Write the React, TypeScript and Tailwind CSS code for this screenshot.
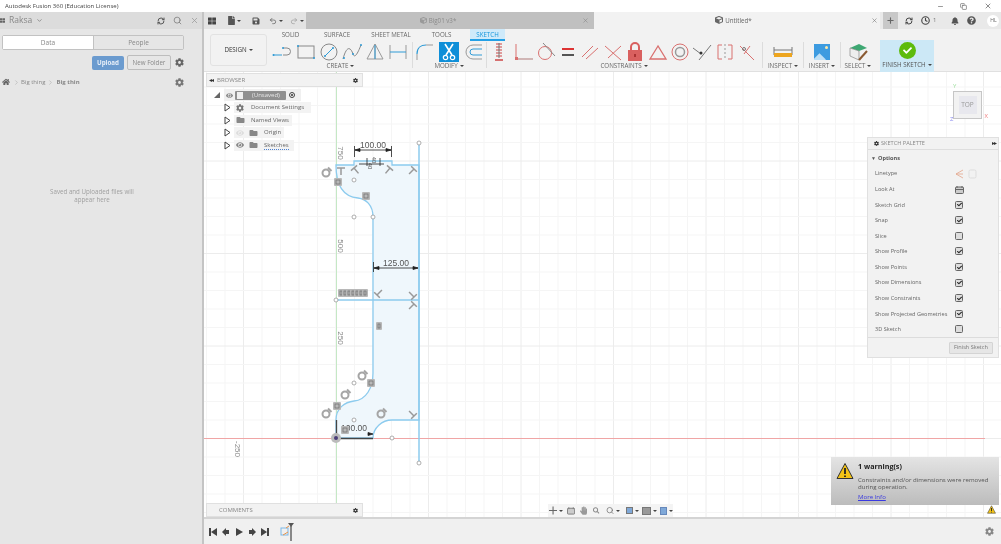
import React from "react";
import { FaBell, FaCog, FaFile, FaHandPaper, FaHome, FaQuestionCircle, FaSave, FaSearch, FaEye, FaFolder, FaCheck, FaThLarge, FaCube } from "react-icons/fa";
import { ChevronDown, ChevronRight, Minus, Plus, RefreshCw, Undo2, Redo2, X, Copy, Search, Clock } from "lucide-react";

const Caret = () => <span className="inline-block ml-[2px] align-middle w-0 h-0 border-x-[2px] border-x-transparent border-t-[2px] border-t-[#444]" />;

const RED = "#d9706f";
const BLUE = "#2f9bd6";

function Ic({ children, w = 22, h = 20 }: { children: React.ReactNode; w?: number; h?: number }) {
  return (
    <svg width={w} height={h} viewBox={`0 0 ${w} ${h}`} fill="none">
      {children}
    </svg>
  );
}

const createIcons = [
  <Ic key="line"><path d="M11 6h4a3.500 3.500 0 0 1 0 7h-4" stroke="#888" strokeWidth="1" /><path d="M1 13h9" stroke={BLUE} /><circle cx="1.500" cy="13" r="1" fill={BLUE} /><circle cx="11" cy="6" r="1" fill={BLUE} /></Ic>,
  <Ic key="rect"><rect x="3" y="4" width="16" height="12" stroke="#888" /><circle cx="3" cy="4" r="1" fill={BLUE} /><circle cx="19" cy="16" r="1" fill={BLUE} /></Ic>,
  <Ic key="circle"><circle cx="11" cy="10" r="8" stroke="#888" /><path d="M7 14l8-8" stroke={BLUE} /><circle cx="7" cy="14" r="1" fill={BLUE} /><circle cx="15" cy="6" r="1" fill={BLUE} /></Ic>,
  <Ic key="spline"><path d="M2 17C6 2 10 6 12 12S18 8 20 3" stroke="#888" /><circle cx="3" cy="16" r="1" fill={BLUE} /><circle cx="12" cy="12" r="1" fill={BLUE} /><circle cx="20" cy="3" r="1" fill={BLUE} /></Ic>,
  <Ic key="tri"><path d="M11 2L3 17h16L11 2v15" stroke="#999" /><path d="M11 3v14" stroke={BLUE} /></Ic>,
  <Ic key="slot"><path d="M3 3v14M19 3v14" stroke="#999" /><path d="M3 10h16" stroke={BLUE} /></Ic>,
];

const modifyIcons = [
  <Ic key="fillet"><path d="M3 18V12M12 3h7" stroke="#999" /><path d="M3 12C3 6 7 3 12 3" stroke={BLUE} strokeWidth="1.200" /></Ic>,
  <div key="trim" className="w-[20px] h-[20px] bg-[#0f8fd8] flex items-center justify-center">
    <Ic w={14} h={18}><path d="M3 1l7 11M11 1L4 12" stroke="#fff" strokeWidth="1.600" /><circle cx="3.500" cy="14.500" r="2.200" stroke="#fff" strokeWidth="1.200" /><circle cx="10.500" cy="14.500" r="2.200" stroke="#fff" strokeWidth="1.200" /></Ic>
  </div>,
  <Ic key="offset"><path d="M20 3h-9a7 7 0 0 0 0 14h9" stroke="#999" /><path d="M20 7h-9a3 3 0 0 0 0 6h9" stroke={BLUE} /></Ic>,
];

const constraintIcons = [
  <Ic key="dim"><path d="M6 2h6M6 5h6M6 8h6M6 11h6M6 14h6" stroke="#c44" /><path d="M9 1v15" stroke="#777" /><path d="M5 18h8" stroke="#c44" strokeWidth="1.500" /></Ic>,
  <Ic key="l"><path d="M4 2v15h17" stroke={RED} /><rect x="3" y="15" width="3" height="3" fill={RED} /><path d="M6 17h15" stroke="#bbb" /></Ic>,
  <Ic key="tan"><circle cx="10" cy="11" r="6.500" stroke={RED} /><path d="M8 1l12 13" stroke="#888" /></Ic>,
  <Ic key="eq"><path d="M5 7h12" stroke="#d33" strokeWidth="2" /><path d="M5 13h12" stroke="#555" strokeWidth="2" /></Ic>,
  <Ic key="par"><path d="M3 15L14 4M7 17L19 6" stroke={RED} /></Ic>,
  <Ic key="perp"><path d="M3 4l16 14M19 4L6 16" stroke={RED} /></Ic>,
  <Ic key="lock"><rect x="4" y="8" width="14" height="11" fill="#d9605f" /><path d="M7 8V5a4 4 0 0 1 8 0v3" stroke="#d9605f" strokeWidth="2" /><rect x="10" y="12" width="2" height="3" fill="#a33" /></Ic>,
  <Ic key="hori"><path d="M11 4L3 17h16z" stroke={RED} strokeWidth="1.300" /></Ic>,
  <Ic key="conc"><circle cx="11" cy="10" r="8" stroke={RED} /><circle cx="11" cy="10" r="4.500" stroke="#999" strokeWidth="1.500" /></Ic>,
  <Ic key="mid"><path d="M2 6l8 6M20 3L8 18" stroke="#777" /><circle cx="10" cy="11" r="1.500" fill="#333" /></Ic>,
  <Ic key="sym"><path d="M8 3H4v14h4M14 3h4v14h-4" stroke={RED} /><path d="M11 2v16" stroke="#999" strokeDasharray="2 2" /></Ic>,
  <Ic key="fix"><path d="M4 4l14 14M14 4L8 12" stroke={RED} /><circle cx="8" cy="7" r="1.500" stroke="#777" /></Ic>,
];

function Section({ label, width, children, gap = "justify-between" }: { label: string; width: string; children: React.ReactNode; gap?: string }) {
  return (
    <div className={`flex flex-col items-center ${width}`}>
      <div className={`flex items-center w-full h-[21px] ${gap}`}>{children}</div>
      <div className="text-[6.200px] leading-[8px] text-[#666] whitespace-nowrap">
        {label}
        <Caret />
      </div>
    </div>
  );
}

const Sep = ({ className }: { className: string }) => <div className={`w-px h-[26px] bg-[#dcdcdc] self-start mt-[1px] ${className}`} />;

function Toolbar() {
  return (
    <div className="h-[43px] bg-[#f2f2f2] border-b border-[#e0e0e0] flex shrink-0">
      <div className="ml-[6px] mt-[5px] w-[57px] h-[32px] rounded-[3px] border border-[#e2e2e2] flex items-center justify-center text-[6.200px] text-[#333]">
        DESIGN
        <Caret />
      </div>
      <div className="flex flex-col ml-[3px] flex-1">
        <div className="flex h-[12px] text-[6.200px] leading-[11px] text-[#666] text-center">
          <div className="w-[39px] ml-[1px]">SOLID</div>
          <div className="w-[54px]">SURFACE</div>
          <div className="w-[54px]">SHEET METAL</div>
          <div className="w-[52px] pr-[5px]">TOOLS</div>
          <div className="w-[35px] bg-[#cfeafa] text-[#1596dc] border-b-2 border-[#23a0e6]">SKETCH</div>
        </div>
        <div className="flex items-start">
          <Section label="CREATE" width="w-[137px] ml-[2px]">{createIcons}</Section>
          <Sep className="ml-[3px]" />
          <Section label="MODIFY" width="w-[70px] ml-[1px]">{modifyIcons}</Section>
          <Sep className="ml-[2px]" />
          <Section label="CONSTRAINTS" width="w-[268px] ml-[3px]">{constraintIcons}</Section>
          <Sep className="ml-[4px]" />
          <Section label="INSPECT" width="w-[36px] ml-[2px]" gap="justify-center">
            <Ic><path d="M2 5v8M20 5v8M2 8h18" stroke="#777" /><rect x="2" y="11" width="18" height="4" fill="#eda51f" /></Ic>
          </Section>
          <Sep className="ml-[2px]" />
          <Section label="INSERT" width="w-[34px] ml-[1px]" gap="justify-center">
            <div className="w-[16px] h-[16px] bg-[#3d9be0] relative overflow-hidden">
              <div className="absolute left-[1px] bottom-[-4px] w-[9px] h-[9px] bg-[#bfe0f6] rotate-45" />
              <div className="absolute right-[2px] top-[2px] w-[3px] h-[3px] rounded-full bg-[#fde9a8]" />
            </div>
          </Section>
          <Sep className="ml-[1px]" />
          <Section label="SELECT" width="w-[34px]" gap="justify-center">
            <Ic>
              <path d="M3 6l9-4 8 4-8 3z" fill="#3fa873" />
              <path d="M3 6l9 3v9l-9-4z" fill="#eee" stroke="#777" strokeWidth=".6" />
              <path d="M12 18l8-9" stroke="#8a5a32" strokeWidth="2" />
            </Ic>
          </Section>
          <div className="w-[54px] h-[32px] mt-[-1px] ml-[5px] bg-[#cce8f6] flex flex-col items-center shrink-0">
            <div className="w-[17px] h-[17px] rounded-full bg-[#5dbb0c] flex items-center justify-center mt-[2px]">
              <FaCheck className="text-white w-[9px] h-[9px]" />
            </div>
            <div className="text-[6.200px] leading-[8px] text-[#555] mt-[2px] whitespace-nowrap">
              FINISH SKETCH
              <Caret />
            </div>
          </div>
        </div>
      </div>
    </div>
  );
}

function TabBar() {
  return (
    <div className="h-[17px] bg-[#c9c9c9] flex items-center shrink-0 text-[#555]">
      <div className="w-[102px] h-full bg-[#e3e3e3] flex items-center shrink-0">
        <FaThLarge className="w-[8px] h-[8px] ml-[4px] text-[#444]" />
        <FaFile className="w-[7px] h-[9px] ml-[12px] text-[#555]" />
        <Caret />
        <FaSave className="w-[8px] h-[8px] ml-[11px] text-[#555]" />
        <Undo2 className="w-[8px] h-[8px] ml-[9px] text-[#555]" />
        <Caret />
        <Redo2 className="w-[8px] h-[8px] ml-[7px] text-[#999]" />
        <Caret />
      </div>
      <div className="w-[288px] h-full bg-[#c0c0c0] flex items-center shrink-0 relative rounded-tl-[2px]">
        <div className="flex-1 flex items-center justify-center text-[6.200px] text-[#8a8a8a] gap-[2px] pr-[12px]">
          <FaCube className="w-[7px] h-[7px] text-[#999]" />
          Big01 v3*
        </div>
        <X className="w-[7px] h-[7px] mr-[5px] text-[#888]" />
      </div>
      <div className="w-[286px] h-full bg-[#f2f2f2] flex items-center shrink-0">
        <div className="flex-1 flex items-center justify-center text-[6.200px] text-[#666] gap-[2px] pl-[2px]">
          <FaCube className="w-[8px] h-[8px] text-[#666]" />
          Untitled*
        </div>
        <X className="w-[7px] h-[7px] mr-[2px] text-[#777]" />
      </div>
      <div className="flex-1 h-full bg-[#e9e9e9] flex items-center">
        <div className="w-[15px] ml-[3px] h-full bg-[#c8c8c8] flex items-center justify-center">
          <Plus className="w-[9px] h-[9px] text-[#666]" strokeWidth={3} />
        </div>
        <RefreshCw className="w-[8px] h-[8px] ml-[7px] text-[#444]" strokeWidth={3} />
        <Clock className="w-[9px] h-[9px] ml-[8px] text-[#444]" strokeWidth={3} />
        <span className="text-[6px] ml-[3px] text-[#777]">1</span>
        <FaBell className="w-[8px] h-[8px] ml-[15px] text-[#555]" />
        <FaQuestionCircle className="w-[9px] h-[9px] ml-[8px] text-[#555]" />
        <div className="w-[12px] h-[12px] ml-[11px] rounded-full bg-white text-[5px] text-[#666] flex items-center justify-center">HL</div>
      </div>
    </div>
  );
}

function LeftPanel() {
  return (
    <div className="w-[204px] shrink-0 bg-[#e6e6e6] border-r-2 border-[#c4c4c4] flex flex-col text-[#888]">
      <div className="h-[17px] bg-[#dcdcdc] flex items-center">
        <FaThLarge className="w-[5px] h-[5px] text-[#666]" />
        <span className="ml-[4px] text-[8.500px] text-[#888]">Raksa</span>
        <ChevronDown className="w-[7px] h-[7px] ml-[4px] text-[#666]" />
        <RefreshCw className="w-[8px] h-[8px] ml-auto text-[#555]" strokeWidth={3} />
        <Search className="w-[9px] h-[9px] ml-[8px] text-[#777]" />
        <X className="w-[9px] h-[9px] ml-[8px] mr-[3px] text-[#999]" />
      </div>
      <div className="mt-[6px] mx-[2px] w-[182px] h-[15px] flex border border-[#c2c2c2] rounded-[2px] text-[6.500px] text-[#888]">
        <div className="w-[90px] bg-white flex items-center justify-center">Data</div>
        <div className="flex-1 bg-[#e6e6e6] border-l border-[#c2c2c2] flex items-center justify-center">People</div>
      </div>
      <div className="flex items-center mt-[5px] ml-[92px]">
        <div className="w-[32px] h-[14px] rounded-[2px] bg-[#6b9bcf] text-[#e6eef8] text-[6.200px] font-bold flex items-center justify-center">Upload</div>
        <div className="w-[44px] h-[15px] ml-[3px] rounded-[2px] border border-[#bdbdbd] text-[6.200px] flex items-center justify-center">New Folder</div>
        <FaCog className="w-[9px] h-[9px] ml-[4px] text-[#666]" />
      </div>
      <div className="flex items-center mt-[6px] ml-[2px] h-[12px] text-[6px] text-[#888]">
        <FaHome className="w-[8px] h-[8px] text-[#666]" />
        <ChevronRight className="w-[7px] h-[7px] ml-[3px] text-[#aaa]" />
        <span className="ml-[1px]">Big thing</span>
        <ChevronRight className="w-[7px] h-[7px] ml-[2px] text-[#aaa]" />
        <span className="ml-[2px] font-bold">Big thin</span>
        <FaCog className="w-[9px] h-[9px] ml-[95px] text-[#777]" />
      </div>
      <div className="mt-[100px] w-[184px] text-center text-[6.200px] leading-[8px] text-[#a0a0a0]">
        Saved and Uploaded files will
        <br />
        appear here
      </div>
    </div>
  );
}

const Perp = ({ x, y, r }: { x: number; y: number; r: number }) => (
  <g transform={`translate(${x} ${y}) rotate(${r})`} stroke="#999" strokeWidth="1.500" fill="none">
    <path d="M-4 0h8M0 0v7" />
  </g>
);

const Ring = ({ x, y }: { x: number; y: number }) => (
  <g fill="none" stroke="#a5a5a5" strokeWidth="2">
    <circle cx={x} cy={y} r="3.500" />
    <path d={`M${x + 2} ${y - 5.500}l3.500 3.500`} />
  </g>
);

const Dot = ({ x, y }: { x: number; y: number }) => <circle cx={x} cy={y} r="2" fill="#fff" stroke="#999" strokeWidth=".8" />;

const Chip = ({ x, y, w = 8 }: { x: number; y: number; w?: number }) => (
  <g>
    <rect x={x} y={y} width={w} height="8" rx="1" fill="#b8b8b8" />
    <rect x={x + 2} y={y + 2} width={w - 4} height="4" fill="none" stroke="#747474" strokeWidth=".8" />
  </g>
);

function Sketch() {
  const xs = Array.from({ length: 44 }, (_, i) => 336 - 18.5 * 7 + 18.5 * i);
  const ys = Array.from({ length: 25 }, (_, i) => 438.5 - 18.5 * 20 + 18.5 * i);
  const major = (v: number, o: number) => Math.abs((v - o) / 92.5 - Math.round((v - o) / 92.5)) < 0.01;
  const outline = "M336 165 H354 V161 H392 V165 H419 V420 H392 C382 420 373 428 373 438 H336 V420 C336 408 345 402 354 401 C366 400 373 388 373 373 V217 C373 205 366 199 358 198 C346 197 336 190 336 165 Z";
  return (
    <svg className="absolute inset-0" width="797" height="445" viewBox="204 72 797 445">
      {xs.map((x) => <line key={x} x1={x} x2={x} y1={72} y2={517} stroke={major(x, 336) ? "#ececec" : "#f5f5f5"} />)}
      {ys.map((y) => <line key={y} y1={y} y2={y} x1={204} x2={1001} stroke={major(y, 438.5) ? "#ececec" : "#f5f5f5"} />)}
      <line x1={336.500} x2={336.500} y1={72} y2={517} stroke="#c5e8c5" />
      <line x1={204} x2={985} y1={438.500} y2={438.500} stroke="#f0a5a5" />
      <path d={outline} fill="#eff7fc" />
      <path d={outline} fill="none" stroke="#8ccbee" strokeWidth="1.300" />
      <path d="M419 143V463" stroke="#8ccbee" strokeWidth="1.500" />
      <path d="M336 300H419" stroke="#8ccbee" strokeWidth="1.300" />
      <path d="M336 438.500H373M336.500 420V438" stroke="#444" strokeWidth="1.300" />
      {[[419, 143], [419, 463], [373, 217], [354, 180], [354, 217], [336, 300], [354, 383], [354, 420], [392, 438]].map(([x, y], i) => <Dot key={i} x={x} y={y} />)}
      <circle cx="336" cy="438" r="5" fill="#bbb" /><circle cx="336" cy="438" r="2" fill="#4a3d78" />
      <g fontFamily="Liberation Sans, sans-serif" fill="#555" fontSize="8.500">
        <text x="373" y="148" textAnchor="middle">100.00</text>
        <text x="396" y="266" textAnchor="middle">125.00</text>
        <text x="354" y="431" textAnchor="middle">100.00</text>
        <text transform="translate(338 153) rotate(90)" fontSize="8" fill="#888" textAnchor="middle">750</text>
        <text transform="translate(338 246) rotate(90)" fontSize="8" fill="#888" textAnchor="middle">500</text>
        <text transform="translate(338 338) rotate(90)" fontSize="8" fill="#888" textAnchor="middle">250</text>
        <text transform="translate(235 449) rotate(90)" fontSize="8" fill="#888" textAnchor="middle">-250</text>
        <text transform="translate(372 160) rotate(90)" fontSize="6" textAnchor="middle">40</text>
        <text transform="translate(368 166) rotate(90)" fontSize="6" textAnchor="middle">40</text>
      </g>
      <g stroke="#222" strokeWidth=".8" fill="#222">
        <path d="M355 150H391M354.500 146V157M391.500 146V157" fill="none" />
        <path d="M355 150l5-1.500v3zM391 150l-5-1.500v3z" />
        <path d="M374 268H418M373.500 262V272" fill="none" />
        <path d="M374 268l5-1.500v3zM418 268l-5-1.500v3z" />
        <path d="M373 434l-5-1.500v3z" />
        <path d="M359 164H384M367 158v8M380 158v8" fill="none" />
      </g>
      <Perp x={341} y={168} r={0} /><Perp x={354} y={168} r={-40} /><Perp x={390} y={168} r={40} /><Perp x={414} y={169} r={45} />
      <Perp x={377} y={295} r={-135} /><Perp x={414} y={297} r={135} /><Perp x={414} y={304} r={45} /><Perp x={414} y={416} r={135} />
      <Ring x={326} y={173} /><Ring x={345} y={395} /><Ring x={326} y={414} /><Ring x={362} y={376} /><Ring x={381} y={414} />
      <Chip x={334} y={178} /><Chip x={362} y={192} /><Chip x={367} y={379} /><Chip x={333} y={402} /><Chip x={376} y={322} w={6} />
      {[338, 342, 346, 350, 354, 358, 362].map((x) => <Chip key={x} x={x} y={289} w={6} />)}
      <Chip x={341} y={426} />
    </svg>
  );
}

function Browser() {
  const Tri = () => <svg width="7" height="9" viewBox="0 0 7 9"><path d="M1 1l5 3.500-5 3.500z" fill="#fff" stroke="#444" /></svg>;
  return (
    <div className="absolute left-[2px] top-[1px] w-[157px] text-[6px] text-[#666]">
      <div className="h-[14px] bg-[#f2f2f2] border border-[#e0e0e0] flex items-center pl-[2px]">
        <span className="text-[#333] text-[6px] tracking-[-1px]">◂◂</span>
        <span className="ml-[4px] text-[#888]">BROWSER</span>
        <FaCog className="w-[5px] h-[5px] ml-auto mr-[4px] text-[#333]" />
      </div>
      <div className="flex items-center h-[12px] mt-[2px] ml-[8px]">
        <svg width="7" height="7" viewBox="0 0 7 7"><path d="M6 0v6H0z" fill="#666" /></svg>
        <div className="flex items-center h-[12px] w-[77px] bg-[#f0f0f0] ml-[3px]">
          <FaEye className="w-[7px] h-[7px] ml-[2px] text-[#888]" />
          <div className="ml-[2px] w-[51px] h-[9px] bg-[#8f8f8f] rounded-[1px] flex items-center text-[#e6e6e6]">
            <span className="w-[6px] h-[7px] bg-[#eee] ml-[2px]" />
            <span className="ml-[9px] text-[6px]">(Unsaved)</span>
          </div>
          <div className="w-[6px] h-[6px] ml-[3px] rounded-full border border-[#444] flex items-center justify-center"><span className="w-[2px] h-[2px] rounded-full bg-[#333]" /></div>
        </div>
      </div>
      <div className="flex items-center h-[12.500px] ml-[18px] mt-[0.5px]">
        <Tri />
        <div className="flex items-center h-[11px] bg-[#f3f3f3] w-[77px] ml-[3px] pl-[2px]">
          <FaCog className="w-[8px] h-[8px] text-[#777]" />
          <span className="ml-[7px] whitespace-nowrap">Document Settings</span>
        </div>
      </div>
      <div className="flex items-center h-[12.500px] ml-[18px]">
        <Tri />
        <div className="flex items-center h-[11px] bg-[#f3f3f3] w-[58px] ml-[3px] pl-[2px]">
          <FaFolder className="w-[9px] h-[8px] text-[#888]" />
          <span className="ml-[6px] whitespace-nowrap">Named Views</span>
        </div>
      </div>
      <div className="flex items-center h-[12.500px] ml-[18px]">
        <Tri />
        <div className="flex items-center h-[11px] bg-[#f3f3f3] w-[50px] ml-[3px] pl-[2px]">
          <FaEye className="w-[8px] h-[8px] text-[#ddd]" />
          <FaFolder className="w-[9px] h-[8px] ml-[5px] text-[#888]" />
          <span className="ml-[6px]">Origin</span>
        </div>
      </div>
      <div className="flex items-center h-[12.500px] ml-[18px]">
        <Tri />
        <div className="flex items-center h-[11px] bg-[#f3f3f3] w-[60px] ml-[3px] pl-[2px]">
          <FaEye className="w-[8px] h-[8px] text-[#888]" />
          <FaFolder className="w-[9px] h-[8px] ml-[5px] text-[#888]" />
          <span className="ml-[6px] border-b border-dotted border-[#4a7fd0] leading-[8px]">Sketches</span>
        </div>
      </div>
    </div>
  );
}

const paletteRows = [
  ["Sketch Grid", true], ["Snap", true], ["Slice", false], ["Show Profile", true], ["Show Points", true],
  ["Show Dimensions", true], ["Show Constraints", true], ["Show Projected Geometries", true], ["3D Sketch", false],
] as const;

function PaletteRow({ label, children }: { label: string; children: React.ReactNode }) {
  return (
    <div className="flex items-center h-[15.700px] pl-[7px]">
      <span className="w-[81px] whitespace-nowrap">{label}</span>
      {children}
    </div>
  );
}

function Palette() {
  return (
    <div className="absolute right-[2px] top-[65px] w-[132px] h-[221px] bg-[#f2f2f2] border border-[#e0e0e0] text-[5.600px] text-[#666] flex flex-col">
      <div className="h-[12px] flex items-center border-b border-[#dedede] pl-[6px]">
        <FaCog className="w-[5px] h-[5px] text-[#333]" />
        <span className="ml-[2px] text-[#888]">SKETCH PALETTE</span>
        <span className="ml-auto mr-[2px] text-[#333] text-[6px] tracking-[-1px]">▸▸</span>
      </div>
      <div className="h-[15px] mt-[1px] flex items-center pl-[3px] font-bold text-[#555]">
        <span className="text-[5px] mr-[2px]">▼</span>Options
      </div>
      <PaletteRow label="Linetype">
        <svg width="22" height="10" viewBox="0 0 22 10" className="ml-[-1px]" fill="none">
          <path d="M1 5l7-4M1 5l7 4M1 5h7" stroke="#e3a48a" strokeWidth=".8" />
          <rect x="14" y="1" width="7" height="8" rx="1.500" stroke="#ddd" />
        </svg>
      </PaletteRow>
      <PaletteRow label="Look At">
        <svg width="9" height="9" viewBox="0 0 9 9" className="ml-[-1px]"><rect x=".5" y="2" width="8" height="6.500" rx="1" fill="#ccc" stroke="#666" /><path d="M2 1v2M7 1v2M1 4.500h7" stroke="#666" /></svg>
      </PaletteRow>
      {paletteRows.map(([label, on]) => (
        <PaletteRow key={label} label={label}>
          <div className="w-[8px] h-[8px] rounded-[1.500px] border border-[#666] bg-[#ddd] flex items-center justify-center ml-[-1px]">
            {on && <FaCheck className="w-[5px] h-[5px] text-[#222]" />}
          </div>
        </PaletteRow>
      ))}
      <div className="mt-auto h-[20px] border-t border-[#dcdcdc] flex items-center justify-end pr-[5px]">
        <div className="w-[44px] h-[12px] bg-[#e6e6e6] border border-[#d4d4d4] rounded-[1px] flex items-center justify-center text-[#777]">Finish Sketch</div>
      </div>
    </div>
  );
}

function ViewCube() {
  return (
    <div className="absolute left-[749px] top-[19px] w-[29px] h-[28px] bg-[#f2f2f2] border border-[#c6c6c6] flex items-center justify-center">
      <div className="w-[18px] h-[18px] bg-[#e8e8ee] flex items-center justify-center text-[6.500px] text-[#999]">TOP</div>
      <span className="absolute left-[-1px] top-[-9px] text-[6px] leading-[7px] text-[#9fdf9f]">Y</span>
      <span className="absolute right-[-7px] bottom-[-2px] text-[6px] leading-[7px] text-[#f08080]">X</span>
      <span className="absolute left-[-4px] bottom-[-5px] text-[6px] leading-[7px] text-[#8888ee]">Z</span>
    </div>
  );
}

const WarnIcon = ({ s }: { s: number }) => (
  <svg width={s} height={s} viewBox="0 0 18 18"><path d="M9 1.500L17 16.500H1z" fill="#f3c316" stroke="#333" strokeWidth="1" /><path d="M9 6v6M9 13.500v1.500" stroke="#222" strokeWidth="1.800" /></svg>
);

function Warning() {
  return (
    <div className="absolute left-[627px] top-[385px] w-[168px] h-[48px] bg-gradient-to-b from-[#e4e4e4] to-[#bcbcbc] flex">
      <div className="ml-[5px] mt-[5px] shrink-0"><WarnIcon s={18} /></div>
      <div className="ml-[4px] mt-[5px] text-[6.100px] leading-[7px] text-[#555]">
        <div className="text-[7.200px] leading-[9px] font-bold text-[#222]">1 warning(s)</div>
        <div className="mt-[5px] w-[138px]">Constraints and/or dimensions were removed during operation.</div>
        <div className="mt-[3px] text-[#3a3ae0] underline">More Info</div>
      </div>
    </div>
  );
}

function NavBar() {
  return (
    <div className="absolute left-[344px] top-[432px] w-[125px] h-[13px] bg-[#f4f4f4] flex items-center pl-[1px] text-[#666]">
      <svg width="9" height="9" viewBox="0 0 9 9" fill="none"><path d="M4.500 0v9M0 4.500h9" stroke="#666" strokeWidth="1.200" /></svg>
      <Caret />
      <svg width="9" height="9" viewBox="0 0 9 9" className="ml-[4px]"><rect x=".5" y="2" width="8" height="6.500" rx="1" fill="#ccc" stroke="#777" /><path d="M2 1v2M7 1v2" stroke="#777" /></svg>
      <FaHandPaper className="w-[8px] h-[9px] ml-[5px] text-[#999]" />
      <FaSearch className="w-[7px] h-[7px] ml-[6px] text-[#888]" />
      <Search className="w-[9px] h-[9px] ml-[6px] text-[#666]" />
      <Caret />
      <div className="w-[8px] h-[7px] ml-[6px] bg-[#7fa8d8] border border-[#777]" />
      <Caret />
      <div className="w-[9px] h-[8px] ml-[3px] bg-[#999] border border-[#777]" />
      <Caret />
      <div className="w-[8px] h-[8px] ml-[3px] bg-[#7fa8d8] border border-[#6688bb]" />
      <Caret />
    </div>
  );
}

function Timeline() {
  const Ctl = ({ d, ml }: { d: string; ml: string }) => (
    <svg width="8" height="8" viewBox="0 0 8 8" className={ml}><path d={d} fill="#444" /></svg>
  );
  return (
    <div className="h-[27px] bg-[#f0f0f0] border-t-2 border-[#d4d4d4] flex items-center shrink-0">
      <Ctl ml="ml-[5px]" d="M0 0h2v8H0zM8 0v8L2 4z" />
      <Ctl ml="ml-[5px]" d="M0 4l4-4v8zM4 2h3v4H4z" />
      <Ctl ml="ml-[5px]" d="M1 0l7 4-7 4z" />
      <Ctl ml="ml-[5px]" d="M8 4L4 0v8zM4 2H1v4h3z" />
      <Ctl ml="ml-[5px]" d="M8 0H6v8h2zM0 0v8l6-4z" />
      <svg width="15" height="18" viewBox="0 0 15 18" className="ml-[11px]" fill="none">
        <rect x="1" y="5" width="7" height="7" stroke="#7ab7e8" />
        <path d="M6 5l3-2M3 12l5-3" stroke="#e8944a" />
        <path d="M11 3v15" stroke="#666" strokeWidth="1.500" />
        <path d="M8 0h6l-3 4z" fill="#555" />
      </svg>
      <FaCog className="w-[9px] h-[9px] ml-auto mr-[7px] text-[#888]" />
    </div>
  );
}

export default function App() {
  return (
    <div className="w-[1001px] h-[544px] flex flex-col overflow-hidden bg-white font-['Open_Sans','Liberation_Sans',sans-serif] blur-[0.4px]">
      <div className="h-[12px] flex items-center shrink-0 text-[6px] text-[#444] pl-[5px] bg-white">
        <span>Autodesk Fusion 360 (Education License)</span>
        <Minus className="w-[7px] h-[7px] ml-auto text-[#555]" />
        <Copy className="w-[7px] h-[7px] ml-[16px] text-[#555]" />
        <X className="w-[8px] h-[8px] ml-[17px] mr-[9px] text-[#555]" />
      </div>
      <div className="flex flex-1 min-h-0">
        <LeftPanel />
        <div className="flex-1 min-w-0 flex flex-col">
          <TabBar />
          <Toolbar />
          <div className="relative flex-1 bg-white overflow-hidden">
            <Sketch />
            <Browser />
            <ViewCube />
            <Palette />
            <Warning />
            <NavBar />
            <div className="absolute right-[5px] top-[433px]"><WarnIcon s={9} /></div>
            <div className="absolute left-[2px] top-[431px] w-[157px] h-[14px] bg-[#f2f2f2] border border-[#e0e0e0] flex items-center pl-[12px] text-[6px] text-[#888]">
              COMMENTS
              <FaCog className="w-[5px] h-[5px] ml-auto mr-[4px] text-[#333]" />
            </div>
          </div>
          <Timeline />
        </div>
      </div>
    </div>
  );
}
